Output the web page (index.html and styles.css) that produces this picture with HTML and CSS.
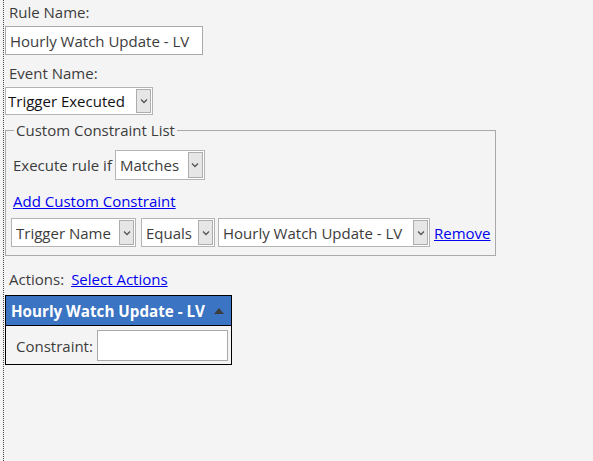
FILE: index.html
```html
<!DOCTYPE html>
<html>
<head>
<meta charset="utf-8">
<link rel="stylesheet" href="styles.css">
</head>
<body>
<div class="page">
	<div class="field-label">Rule Name:</div>
	<input class="text-input rule-name" value="Hourly Watch Update - LV">

	<div class="field-label">Event Name:</div>
	<div class="select-box event-select">
		<select><option>Trigger Executed</option></select>
		<span class="arrow"><svg width="8" height="6" viewBox="0 0 8 6"><path d="M1 1.5 L4 4.5 L7 1.5" fill="none" stroke="#555" stroke-width="1.3"/></svg></span>
	</div>

	<fieldset class="constraint-list">
		<legend>Custom Constraint List</legend>
		<div class="execute-row">
			<span>Execute rule if</span>
			<div class="select-box">
				<select><option>Matches</option></select>
				<span class="arrow"><svg width="8" height="6" viewBox="0 0 8 6"><path d="M1 1.5 L4 4.5 L7 1.5" fill="none" stroke="#555" stroke-width="1.3"/></svg></span>
			</div>
		</div>
		<a href="#" class="add-link">Add Custom Constraint</a>
		<div class="constraint-row">
			<div class="select-box w-trigger">
				<select><option>Trigger Name</option></select>
				<span class="arrow"><svg width="8" height="6" viewBox="0 0 8 6"><path d="M1 1.5 L4 4.5 L7 1.5" fill="none" stroke="#555" stroke-width="1.3"/></svg></span>
			</div>
			<div class="select-box w-equals">
				<select><option>Equals</option></select>
				<span class="arrow"><svg width="8" height="6" viewBox="0 0 8 6"><path d="M1 1.5 L4 4.5 L7 1.5" fill="none" stroke="#555" stroke-width="1.3"/></svg></span>
			</div>
			<div class="select-box w-value">
				<select><option>Hourly Watch Update - LV</option></select>
				<span class="arrow"><svg width="8" height="6" viewBox="0 0 8 6"><path d="M1 1.5 L4 4.5 L7 1.5" fill="none" stroke="#555" stroke-width="1.3"/></svg></span>
			</div>
			<a href="#" class="remove-link">Remove</a>
		</div>
	</fieldset>

	<div class="actions-row">
		<span>Actions:</span>
		<a href="#">Select Actions</a>
	</div>

	<div class="action-panel">
		<div class="action-header">
			<span>Hourly Watch Update - LV</span>
			<svg width="10" height="6" viewBox="0 0 10 6"><path d="M0 6 L5 0 L10 6 Z" fill="#3d3d3d"/></svg>
		</div>
		<div class="action-body">
			<span>Constraint:</span>
			<input class="text-input constraint-input">
		</div>
	</div>
</div>
</body>
</html>
```
FILE: styles.css
```css
html, body{
	margin: 0;
	height: 100%;
	background-color: #f4f4f4;
}
body{
	font-family: 'Open Sans', 'Noto Sans', sans-serif;
	font-size: 15px;
	color: #3c3c3c;
}
.page{
	margin-left: 3px;
	min-height: 100%;
	box-sizing: border-box;
	border-left: 1px dotted #444;
	padding: 2px 0 0 1px;
}
.field-label{
	padding-left: 4px;
	line-height: 20px;
}
.text-input{
	box-sizing: border-box;
	border: 1px solid #a9a9a9;
	background: white;
	font-family: inherit;
	font-size: 15px;
	color: #3c3c3c;
	outline: none;
	padding: 0 4px;
}
.rule-name{
	display: block;
	width: 198px;
	height: 29px;
	margin: 4px 0 8px 0;
}
.select-box{
	box-sizing: border-box;
	display: inline-flex;
	align-items: center;
	height: 29px;
	border: 1px solid #b4b4b4;
	background: white;
	padding: 1px;
	flex-shrink: 0;
}
.select-box select{
	flex: 1;
	appearance: none;
	-webkit-appearance: none;
	border: none;
	background: transparent;
	font-family: inherit;
	font-size: 15px;
	color: #3c3c3c;
	padding: 0 0 0 3px;
	outline: none;
	min-width: 0;
}
.arrow{
	box-sizing: border-box;
	display: flex;
	align-items: center;
	justify-content: center;
	width: 15px;
	height: 100%;
	background: #e6e6e6;
	border: 1px solid #adadad;
}
.event-select{
	display: flex;
	width: 148px;
	height: 28px;
	margin-top: 4px;
}
.event-select select{
	color: #111;
	padding-left: 1px;
}
.constraint-list{
	margin: 7px 0 0 0;
	width: 491px;
	min-width: 0;
	box-sizing: border-box;
	border: 1px solid #a9a9a9;
	padding: 12px 3px 8px 5px;
}
legend{
	padding: 0 2px;
	margin-left: 3px;
	line-height: 16px;
}
.execute-row{
	display: flex;
	align-items: center;
	gap: 3px;
	margin-left: 2px;
}
.execute-row .select-box{
	width: 90px;
	height: 30px;
}
.add-link{
	display: block;
	margin: 11px 0 0 2px;
	line-height: 20px;
}
a{
	color: #0000ee;
}
.constraint-row{
	display: flex;
	align-items: center;
	margin-top: 7px;
}
.w-trigger{
	width: 125px;
	margin-right: 5px;
}
.w-equals{
	width: 74px;
	margin-right: 3px;
}
.w-value{
	width: 212px;
	margin-right: 4px;
}
.actions-row{
	display: flex;
	gap: 7px;
	padding-left: 4px;
	margin-top: 13px;
	line-height: 20px;
}
.action-panel{
	margin-top: 6px;
	width: 227px;
	box-sizing: border-box;
	border: 1px solid #000;
}
.action-header{
	display: flex;
	align-items: center;
	justify-content: space-between;
	background-color: #3a74c2;
	color: white;
	font-weight: 700;
	font-size: 15.2px;
	height: 30px;
	padding: 0 7px 0 5px;
	border-bottom: 1px solid #000;
	box-sizing: border-box;
}
.action-body{
	display: flex;
	align-items: center;
	gap: 4px;
	padding: 4px 4px 3px 10px;
}
.constraint-input{
	width: 131px;
	height: 31px;
}
```
